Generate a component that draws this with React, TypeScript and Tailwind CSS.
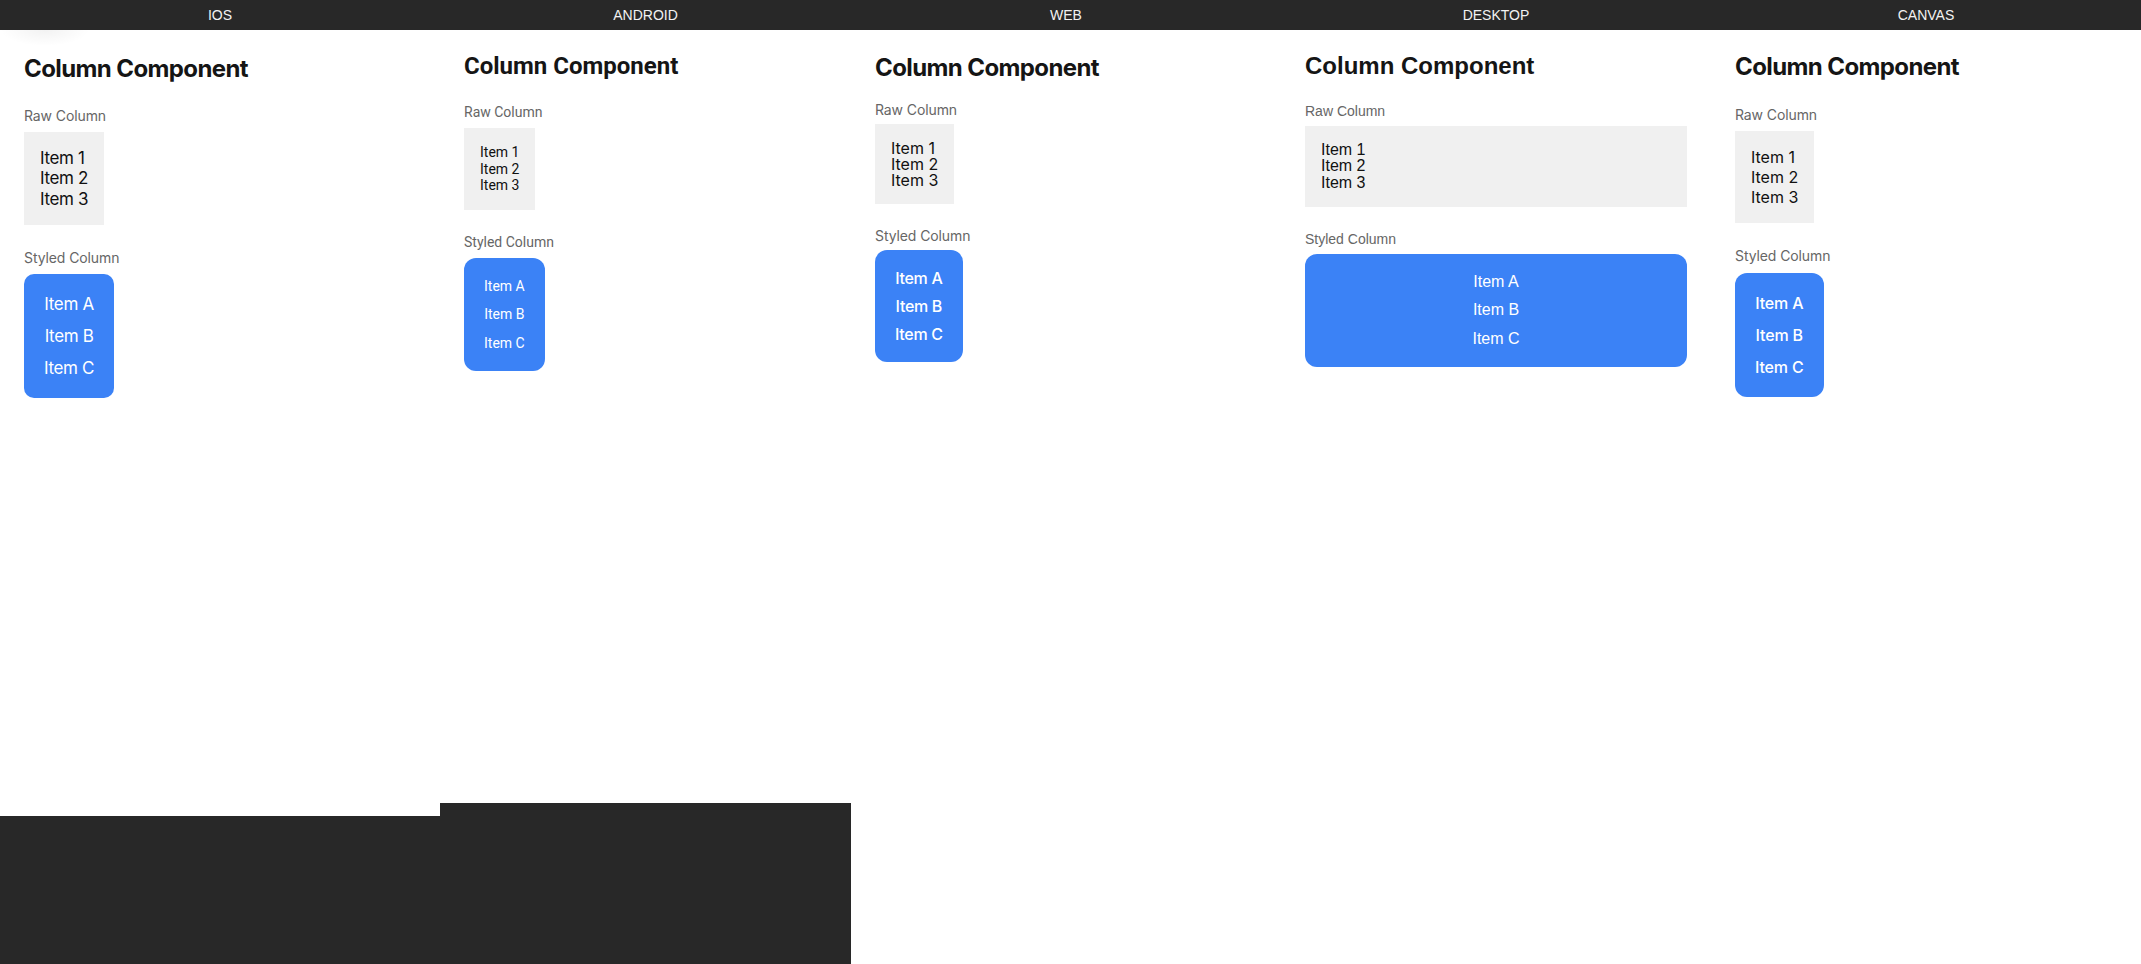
import React from 'react';

type Platform = {
  name: string;
  column: string;
  body: string;
  below?: string;
  wrap: string;
  title: string;
  label: string;
  styledLabel: string;
  raw: string;
  styled: string;
};

const platforms: Platform[] = [
  {
    name: 'IOS',
    column: 'w-[440px] shrink-0',
    body: 'h-[786px]',
    below: 'flex-1 bg-[#282828]',
    wrap: "font-['Inter',sans-serif] px-6 pt-6",
    title: 'text-[24px] leading-[29px] tracking-[-0.6px] mb-6',
    label: 'text-[14px] leading-[17px] tracking-[-0.1px] mb-2',
    styledLabel: 'mt-6',
    raw: 'self-start p-4 text-[17px] leading-[1.2] tracking-[-0.35px]',
    styled: 'self-start rounded-[10px] p-5 gap-3 text-[17px] leading-[20px] tracking-[-0.35px]',
  },
  {
    name: 'ANDROID',
    column: 'w-[411px] shrink-0',
    body: 'h-[773px]',
    below: 'flex-1 bg-[#282828]',
    wrap: "font-['Roboto',sans-serif] px-6 pt-[22px]",
    title: 'text-[24px] leading-[28px] mb-6',
    label: 'text-[14px] leading-[16.4px] mb-2',
    styledLabel: 'mt-6',
    raw: 'self-start p-4 text-[14px] leading-[16.4px]',
    styled: 'self-start rounded-xl p-5 gap-3 text-[14px] leading-[16.4px]',
  },
  {
    name: 'WEB',
    column: 'flex-1',
    body: 'flex-1',
    wrap: "font-['Inter',sans-serif] px-6 pt-[23px]",
    title: 'text-[24px] leading-[29px] tracking-[-0.6px] mb-[19px]',
    label: 'text-[14px] leading-[17px] tracking-[-0.1px] mb-[6px]',
    styledLabel: 'mt-[23px]',
    raw: 'self-start p-4 text-[16px] leading-[16px]',
    styled: 'self-start rounded-xl p-5 gap-3 text-[16px] leading-[16px] tracking-[-0.3px] font-medium',
  },
  {
    name: 'DESKTOP',
    column: 'flex-1',
    body: 'flex-1',
    wrap: "font-['Liberation_Sans',Arial,sans-serif] px-6 pt-[22px]",
    title: 'text-[24px] leading-[27.6px] mb-[23px]',
    label: 'text-[14px] leading-[16.1px] mb-[7.5px]',
    styledLabel: 'mt-[23.5px]',
    raw: 'p-4 text-[16px] leading-[16.3px]',
    styled: 'rounded-xl p-5 gap-3 text-[16px] leading-[16.3px]',
  },
  {
    name: 'CANVAS',
    column: 'flex-1',
    body: 'flex-1',
    wrap: "font-['Inter',sans-serif] px-6 pt-[22px]",
    title: 'text-[24px] leading-[29px] tracking-[-0.6px] mb-[25px]',
    label: 'text-[14px] leading-[17px] tracking-[-0.1px] mb-2',
    styledLabel: 'mt-6 mb-[9px]',
    raw: 'self-start p-4 text-[16px] leading-[20px]',
    styled: 'self-start rounded-xl p-5 gap-3 text-[16px] leading-[20px] tracking-[-0.15px] font-medium',
  },
];

function ColumnDemo({ p }: { p: Platform }) {
  return (
    <div className={`flex flex-col ${p.wrap}`}>
      <h2 className={`font-bold text-[#151515] ${p.title}`}>Column Component</h2>

      <div className={`text-[#666666] ${p.label}`}>Raw Column</div>
      <div className={`flex flex-col bg-[#f0f0f0] text-[#111111] ${p.raw}`}>
        <span>Item 1</span>
        <span>Item 2</span>
        <span>Item 3</span>
      </div>

      <div className={`text-[#666666] ${p.label} ${p.styledLabel}`}>Styled Column</div>
      <div className={`flex flex-col items-center bg-[#3b82f6] text-white ${p.styled}`}>
        <span>Item A</span>
        <span>Item B</span>
        <span>Item C</span>
      </div>
    </div>
  );
}

export default function App() {
  return (
    <div className="relative flex h-screen w-full overflow-hidden bg-white">
      {platforms.map((p) => (
        <div key={p.name} className={`flex flex-col ${p.column}`}>
          <div className="flex h-[30px] shrink-0 items-center justify-center bg-[#282828] font-['Liberation_Sans',Arial,sans-serif] text-[14px] text-[#f2f2f2]">
            {p.name}
          </div>
          <div className={`relative bg-white ${p.body}`}>
            {p.name === 'IOS' && (
              <div className="pointer-events-none absolute left-0 top-0 h-[16px] w-[90px] bg-[radial-gradient(ellipse_at_top,rgba(0,0,0,0.05),transparent_70%)]" />
            )}
            <ColumnDemo p={p} />
          </div>
          {p.below && <div className={p.below} />}
        </div>
      ))}
    </div>
  );
}
